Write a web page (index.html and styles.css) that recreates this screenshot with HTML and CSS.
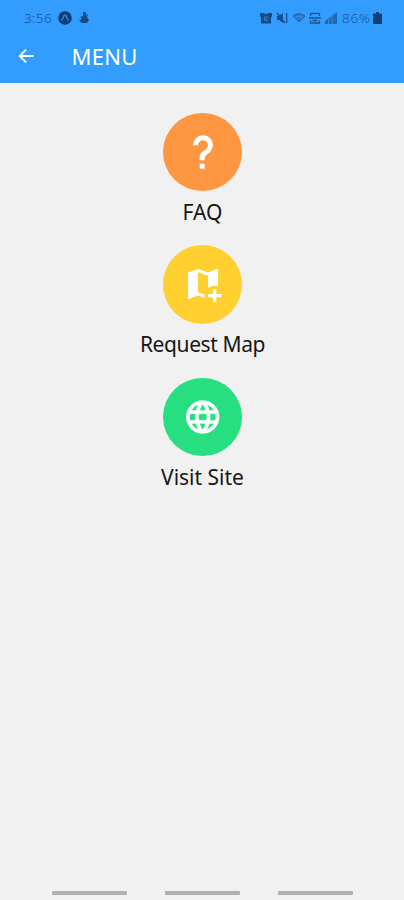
FILE: index.html
```html
<!DOCTYPE html>
<html lang="en">
<head>
<meta charset="utf-8">
<title>Menu</title>
<link rel="stylesheet" href="styles.css">
</head>
<body>
<header class="top">
  <div class="status">
    <span class="time">3:56</span>
    <svg class="app" viewBox="0 0 14 14"><circle cx="7" cy="7" r="6.8" fill="#0e3d74"/><path d="M3.7 9.8 6.2 4.4Q7 3.2 7.8 4.4L10.3 9.8" fill="none" stroke="#3188df" stroke-width="1.3"/></svg>
    <svg class="bug" viewBox="0 0 10 13"><path d="M4 1h3v3l2-1-1 3 2 3-2 3H3L0 9.500 3 8 1 6l3-1z" fill="#154a86"/></svg>
    <span class="space"></span>
    <svg class="alarm" viewBox="0 0 12 12"><path d="M0 1h3l3 1 3-1h3v3l-1 2v5.500H1V6L0 4z" fill="#154a86"/><circle cx="6" cy="6.700" r="2.400" fill="#2b7fd2"/><path d="M6 5v2h2" fill="none" stroke="#123f73"/></svg>
    <svg class="mute" viewBox="0 0 12 12"><path d="M1 4h2l4-3v10L3 8H1z" fill="#17508f"/><path d="m1 1 8 10M10.600 1v10" fill="none" stroke="#17508f" stroke-width="1.300"/></svg>
    <svg class="wifi" viewBox="0 0 14 12"><path d="M1 4q6-4.500 12 0L7 10z" fill="#2b77c5" stroke="#1e62aa"/><path d="M3 5.500q4-3 8 0" fill="none" stroke="#3a96f2"/></svg>
    <svg class="data" viewBox="0 0 12 12"><path d="M1.500 4V1.500h9V4M1.500 8.500V11h9V8.500M0 6h12M3.500 8.500h5" fill="none" stroke="#1b5697" stroke-width="1.300"/></svg>
    <svg class="signal" viewBox="0 0 12 12"><path d="M0 12V9l12-9v12z" fill="#2468ae"/><path d="M3.500 5v7M7 3v9" stroke="#3388df"/></svg>
    <span class="percent">86%</span>
    <svg class="battery" viewBox="0 0 9 12"><path d="M3 0h3v1.500h2q1 0 1 1V11q0 1-1 1H1q-1 0-1-1V2.500q0-1 1-1h2z" fill="#123f75"/></svg>
  </div>
  <div class="bar">
    <svg class="back" viewBox="0 0 18 16"><path d="M16.500 8H2M8.500 1.300 1.800 8l6.700 6.700" fill="none" stroke="#fff" stroke-width="1.900"/></svg>
    <h1 class="title">MENU</h1>
  </div>
</header>
<main class="menu">
  <a class="item">
    <span class="disc orange"><svg viewBox="0 0 24 24"><path d="M10,19H13V22H10V19M12,2C17.35,2.22 19.68,7.62 16.5,11.67C15.67,12.67 14.33,13.33 13.67,14.17C13,15 13,16 13,17H10C10,15.33 10,13.92 10.67,12.92C11.33,11.92 12.67,11.33 13.5,10.67C15.92,8.43 15.32,5.26 12,5A3,3 0 0,0 9,8H6A6,6 0 0,1 12,2Z"/></svg></span>
    <span class="label">FAQ</span>
  </a>
  <a class="item">
    <span class="disc yellow"><svg viewBox="0 0 24 24"><path d="M9,3L3.36,4.9C3.15,4.97 3,5.15 3,5.38V20.5A.5,.5 0 0,0 3.5,21L3.66,20.97L9,18.9L13.16,20.36C13.06,19.92 13,19.46 13,19C13,18.77 13,18.54 13.04,18.3L9,16.9V5L15,7.1V14.56C16.07,13.6 17.47,13 19,13C19.7,13 20.37,13.13 21,13.36V3.5A.5,.5 0 0,0 20.5,3L20.34,3.03L15,5.1L9,3M18,15V18H15V20H18V23H20V20H23V18H20V15H18Z"/></svg></span>
    <span class="label request">Request Map</span>
  </a>
  <a class="item">
    <span class="disc green"><svg class="globe" viewBox="0 0 24 24"><path d="M16.36,14C16.44,13.34 16.5,12.68 16.5,12C16.5,11.32 16.44,10.66 16.36,10H19.74C19.9,10.64 20,11.31 20,12C20,12.69 19.9,13.36 19.74,14M14.59,19.56C15.19,18.45 15.65,17.25 15.97,16H18.92C17.96,17.65 16.43,18.93 14.59,19.56M14.34,14H9.66C9.56,13.34 9.5,12.68 9.5,12C9.5,11.32 9.56,10.65 9.66,10H14.34C14.43,10.65 14.5,11.32 14.5,12C14.5,12.68 14.43,13.34 14.34,14M12,19.96C11.17,18.76 10.5,17.43 10.09,16H13.91C13.5,17.43 12.83,18.76 12,19.96M8,8H5.08C6.03,6.34 7.57,5.06 9.4,4.44C8.8,5.55 8.35,6.75 8,8M5.08,16H8C8.35,17.25 8.8,18.45 9.4,19.56C7.57,18.93 6.03,17.65 5.08,16M4.26,14C4.1,13.36 4,12.69 4,12C4,11.31 4.1,10.64 4.26,10H7.64C7.56,10.66 7.5,11.32 7.5,12C7.5,12.68 7.56,13.34 7.64,14M12,4.03C12.83,5.23 13.5,6.57 13.91,8H10.09C10.5,6.57 11.17,5.23 12,4.03M18.92,8H15.97C15.65,6.75 15.19,5.55 14.59,4.44C16.43,5.07 17.96,6.34 18.92,8M12,2C6.47,2 2,6.5 2,12A10,10 0 0,0 12,22A10,10 0 0,0 22,12A10,10 0 0,0 12,2Z"/></svg></span>
    <span class="label">Visit Site</span>
  </a>
</main>
<footer class="nav"><i></i><i></i><i></i></footer>
</body>
</html>
```
FILE: styles.css
```css
* { box-sizing: border-box; }
body {
  margin: 0;
  height: 900px;
  display: flex;
  flex-direction: column;
  background: #f1f1f1;
  font-family: "Noto Sans", sans-serif;
  overflow: hidden;
}
svg { display: block; flex: none; }
.top { height: 83px; background: #339cff; flex: none; }
.status {
  height: 34px;
  padding: 1px 22px 0 24px;
  display: flex;
  align-items: center;
  color: #1a5596;
  font-size: 13.5px;
  font-weight: 300;
}
.time { width: 34px; letter-spacing: 0.4px; }
.app { width: 14px; height: 14px; }
.bug { width: 10px; height: 13px; margin-left: 7px; }
.space { flex: 1; }
.alarm { width: 12px; height: 12px; margin-right: 4px; }
.mute { width: 12px; height: 12px; margin-right: 4px; }
.wifi { width: 14px; height: 12px; margin-right: 3px; }
.data { width: 12px; height: 12px; margin-right: 4px; }
.signal { width: 12px; height: 12px; margin-right: 5px; }
.percent { width: 31px; letter-spacing: 0.8px; white-space: nowrap; }
.battery { width: 9px; height: 12px; }
.bar { height: 44px; display: flex; align-items: center; padding-left: 18px; }
.back { width: 17px; height: 16px; }
.title {
  margin: 0 0 0 36.500px;
  color: #fff;
  font-size: 22px;
  font-weight: 400;
  line-height: 30px;
  letter-spacing: 0.3px;
}
.menu {
  flex: 1;
  padding: 29.500px 0 0 1px;
  display: flex;
  flex-direction: column;
  align-items: center;
}
.item { height: 132.500px; display: flex; flex-direction: column; align-items: center; }
.disc {
  width: 78.500px;
  height: 78.500px;
  flex: none;
  border-radius: 50%;
  display: flex;
  align-items: center;
  justify-content: center;
}
.disc svg { width: 40px; height: 40px; fill: #fff; }
.disc .globe { width: 39.500px; stroke: #fff; stroke-width: 0.25px; }
.orange { background: #ff9742; }
.yellow { background: #ffd02f; }
.green { background: #27df81; }
.label { margin-top: 5.800px; font-size: 21px; line-height: 30px; color: #161616; white-space: nowrap; }
.request { letter-spacing: -0.4px; }
.nav { height: 10px; flex: none; display: flex; justify-content: center; gap: 38px; padding-left: 1px; }
.nav i { width: 75px; height: 4px; margin-top: 1px; border-radius: 1px; background: #b0b0b0; }
```
